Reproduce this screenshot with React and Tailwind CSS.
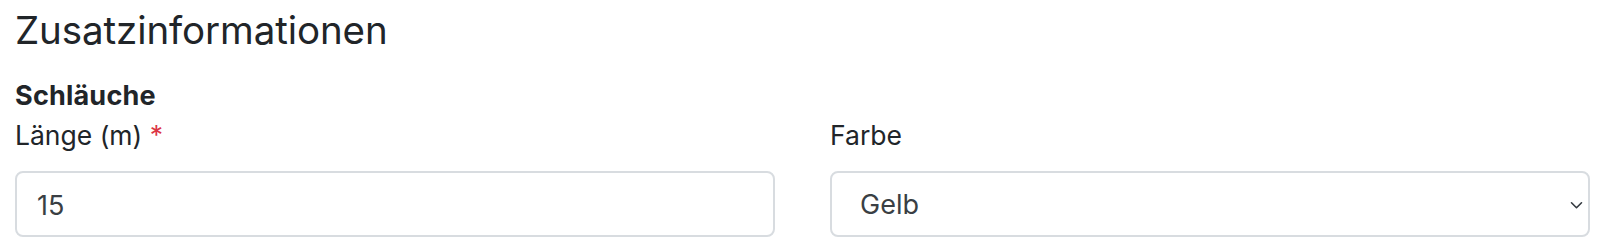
import React from 'react';

export default function App() {
  return (
    <div className="min-h-[252px] bg-white pl-[15px] pr-[10px] pt-[6px] text-[#212529] font-['Inter',sans-serif]">
      {/* Section heading */}
      <h3 className="text-[38.5px] leading-[48px] font-normal tracking-[-0.1px]">Zusatzinformationen</h3>

      <h6 className="mt-[26px] text-[27px] leading-[32px] font-bold tracking-[0.2px]">Schläuche</h6>

      <div className="flex gap-[55px] mt-[5px]">
        <div className="flex-1 flex flex-col">
          <label className="text-[26.5px] leading-[36px]">
            Länge (m) <span className="text-[#dc3545]">*</span>
          </label>
          <input
            type="text"
            defaultValue="15"
            className="mt-[18px] h-[66px] w-full rounded-[8px] border-2 border-[#d8dce0] bg-white px-[20px] pt-[2px] text-[27px] text-[#3a3f44] outline-none"
          />
        </div>

        <div className="flex-1 flex flex-col">
          <label className="text-[26.5px] leading-[36px]">Farbe</label>
          <div className="mt-[18px] h-[66px] w-full rounded-[8px] border-2 border-[#d8dce0] bg-white pl-[28px] pr-[5px] pt-[2px] flex items-center justify-between">
            <span className="text-[27px] text-[#3a3f44]">Gelb</span>
            <svg width="13" height="9" viewBox="0 0 13 9" fill="none">
              <path d="M1.5 1.75l5 5 5-5" stroke="#343a40" strokeWidth="1.6" strokeLinecap="round" strokeLinejoin="round" />
            </svg>
          </div>
        </div>
      </div>
    </div>
  );
}
